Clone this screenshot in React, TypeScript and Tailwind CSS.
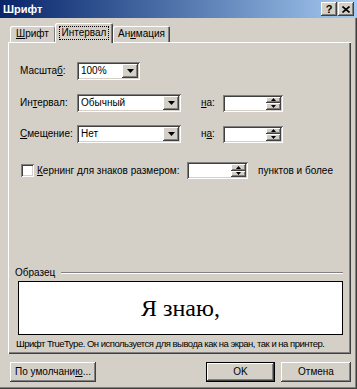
import React from 'react';

const raised =
  'bg-[#d4d0c8] shadow-[inset_-1px_-1px_#404040,inset_1px_1px_#ffffff,inset_-2px_-2px_#808080,inset_2px_2px_#d4d0c8]';
const sunken =
  'bg-white shadow-[inset_1px_1px_#808080,inset_-1px_-1px_#ffffff,inset_2px_2px_#404040,inset_-2px_-2px_#d4d0c8]';

const DownArrow = () => (
  <svg width="7" height="4" viewBox="0 0 7 4">
    <path d="M0 0h7L3.5 4z" fill="#000" />
  </svg>
);

const Combo = ({ value, width }: { value: string; width: string }) => (
  <div className={`${sunken} ${width} h-[18px] flex items-center p-[2px]`}>
    <span className="flex-1 pl-[2px] leading-none">{value}</span>
    <div className={`${raised} w-[16px] h-full flex items-center justify-center`}>
      <DownArrow />
    </div>
  </div>
);

const Spinner = ({ width }: { width: string }) => (
  <div className={`${sunken} ${width} h-[17px] flex p-[2px]`}>
    <span className="flex-1" />
    <div className="w-[15px] flex flex-col">
      <div className={`${raised} flex-1 flex items-center justify-center`}>
        <svg width="5" height="3" viewBox="0 0 5 3">
          <path d="M2.5 0L5 3H0z" fill="#000" />
        </svg>
      </div>
      <div className={`${raised} flex-1 flex items-center justify-center`}>
        <svg width="5" height="3" viewBox="0 0 5 3">
          <path d="M0 0h5L2.5 3z" fill="#000" />
        </svg>
      </div>
    </div>
  </div>
);

const Button = ({ children, width, isDefault }: { children: React.ReactNode; width: string; isDefault?: boolean }) => (
  <div
    className={`${width} h-[20px] flex items-center justify-center ${
      isDefault
        ? 'border border-black bg-[#d4d0c8] shadow-[inset_-1px_-1px_#404040,inset_1px_1px_#ffffff,inset_-2px_-2px_#808080]'
        : raised
    }`}
  >
    {children}
  </div>
);

export default function App() {
  return (
    <div className="w-[357px] h-[389px] bg-[#d4d0c8] flex flex-col text-[10px] text-black font-['Liberation_Sans',Arial,sans-serif] shadow-[inset_-1px_-1px_#404040,inset_-2px_-2px_#808080] leading-none">
      {/* Title bar */}
      <div className="h-[18px] flex items-center pl-[3px] pr-[3px] bg-linear-to-r from-[#0a246a] to-[#a6caf0]">
        <span className="flex-1 text-white font-bold text-[11px]">Шрифт</span>
        <div className="flex gap-[1px]">
          <div className={`${raised} w-[16px] h-[14px] flex items-center justify-center font-bold text-[11px]`}>?</div>
          <div className={`${raised} w-[16px] h-[14px] flex items-center justify-center`}>
            <svg width="8" height="7" viewBox="0 0 8 7">
              <path d="M0.5 0.5L7.5 6.5M7.5 0.5L0.5 6.5" stroke="#000" strokeWidth="1.6" />
            </svg>
          </div>
        </div>
      </div>

      <div className="flex-1 flex flex-col pl-[8px] pr-[6px]">
        {/* Tabs */}
        <div className="mt-[5px] flex items-end pl-[2px]">
          <div className="w-[45px] h-[16px] flex items-center justify-center rounded-t-[2px] shadow-[inset_1px_1px_#ffffff,inset_-1px_0_#808080]">
            <span><u>Ш</u>рифт</span>
          </div>
          <div className="relative z-10 -mb-px w-[58px] h-[20px] flex items-start justify-center pt-[4px] bg-[#d4d0c8] rounded-t-[2px] shadow-[inset_1px_1px_#ffffff,inset_-1px_0_#404040,inset_-2px_0_#808080]">
            <span className="outline outline-1 outline-dotted outline-black px-[2px] py-[1px]">Интервал</span>
          </div>
          <div className="w-[57px] h-[16px] flex items-center justify-center rounded-t-[2px] shadow-[inset_1px_1px_#ffffff,inset_-1px_0_#404040,inset_-2px_0_#808080]">
            <span>Ан<u>и</u>мация</span>
          </div>
        </div>

        {/* Panel */}
        <div className="h-[312px] flex flex-col shadow-[inset_1px_1px_#ffffff,inset_-1px_-1px_#404040,inset_-2px_-2px_#808080]">
          <div className="pl-[12px] pt-[20px] flex flex-col">
            <div className="flex items-center h-[18px]">
              <span className="w-[57px]">Масшта<u>б</u>:</span>
              <Combo value="100%" width="w-[63px]" />
            </div>
            <div className="flex items-center h-[18px] mt-[14px]">
              <span className="w-[57px]">Ин<u>т</u>ервал:</span>
              <Combo value="Обычный" width="w-[104px]" />
              <span className="ml-[20px] w-[22px]"><u>н</u>а:</span>
              <Spinner width="w-[60px]" />
            </div>
            <div className="flex items-center h-[18px] mt-[13px]">
              <span className="w-[57px]"><u>С</u>мещение:</span>
              <Combo value="Нет" width="w-[104px]" />
              <span className="ml-[20px] w-[22px]">н<u>а</u>:</span>
              <Spinner width="w-[60px]" />
            </div>
            <div className="flex items-center h-[17px] mt-[19px]">
              <div className={`${sunken} w-[13px] h-[13px] ml-[1px]`} />
              <span className="ml-[3px] w-[150px]"><u>К</u>ернинг для знаков размером:</span>
              <Spinner width="w-[61px]" />
              <span className="ml-[10px]">пунктов и более</span>
            </div>
          </div>

          {/* Sample */}
          <div className="mt-auto pb-[3px] flex flex-col">
            <div className="flex items-center pl-[7px] pr-[8px]">
              <span>Образец</span>
              <div className="flex-1 ml-[6px] h-[2px] border-t border-[#808080] border-b border-b-white" />
            </div>
            <div className="mt-[3px] ml-[10px] mr-[8px] h-[54px] bg-white border border-black flex items-center justify-center">
              <span className="text-[24px] font-['Liberation_Serif','Times_New_Roman',serif]">Я знаю,</span>
            </div>
            <div className="mt-[4px] pl-[8px] h-[12px] text-[9.5px] tracking-[-0.5px] whitespace-nowrap">
              Шрифт TrueType. Он используется для вывода как на экран, так и на принтер.
            </div>
          </div>
        </div>

        {/* Buttons */}
        <div className="mt-[8px] flex items-center pl-[2px]">
          <Button width="w-[86px]">По умолчани<u>ю</u>...</Button>
          <div className="flex-1" />
          <Button width="w-[69px]" isDefault>OK</Button>
          <div className="w-[6px]" />
          <Button width="w-[70px]">Отмена</Button>
        </div>
      </div>
    </div>
  );
}
